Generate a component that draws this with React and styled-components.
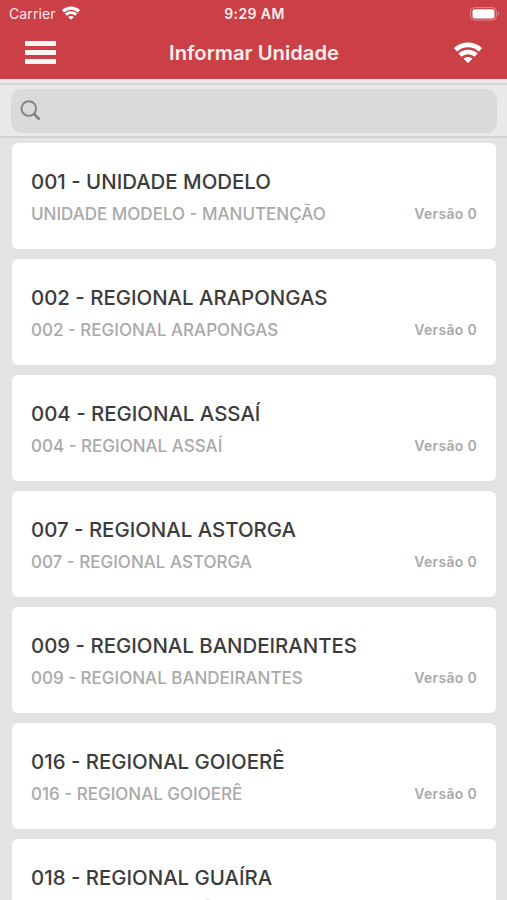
import styled, { createGlobalStyle } from "styled-components";

const UNITS = [
    { code: "001", name: "UNIDADE MODELO", detail: "UNIDADE MODELO - MANUTENÇÃO" },
    { code: "002", name: "REGIONAL ARAPONGAS" },
    { code: "004", name: "REGIONAL ASSAÍ" },
    { code: "007", name: "REGIONAL ASTORGA" },
    { code: "009", name: "REGIONAL BANDEIRANTES" },
    { code: "016", name: "REGIONAL GOIOERÊ" },
    { code: "018", name: "REGIONAL GUAÍRA" },
];

function WifiIcon({ width, height }) {
    return (
        <svg width={width} height={height} viewBox="0 0 28 21" fill="none">
            <path d="M1.5 7.9C8.4 1.2 19.6 1.2 26.5 7.9" stroke="#fff" strokeWidth="4.8" />
            <path d="M5.8 13C10.5 8.9 17.5 8.9 22.2 13" stroke="#fff" strokeWidth="4.4" />
            <path d="M9.6 16.8C12.2 14.4 15.8 14.4 18.4 16.8L14 21Z" fill="#fff" />
        </svg>
    );
}

export default function App() {
    return (
        <Screen>
            <GlobalStyle />
            <Header>
                <StatusBar>
                    <Carrier>
                        Carrier
                        <WifiIcon width={18} height={14} />
                    </Carrier>
                    <Clock>9:29 AM</Clock>
                    <Battery>
                        <svg width="30" height="14" viewBox="0 0 30 14" fill="none">
                            <rect x="0.6" y="0.6" width="25.8" height="12.4" rx="3.8" stroke="#e2898e" />
                            <rect x="2.5" y="2.2" width="22" height="9.2" rx="2" fill="#fff" />
                            <path d="M28 4.8C29.6 5.5 29.6 8.3 28 9Z" fill="#e2898e" />
                        </svg>
                    </Battery>
                </StatusBar>
                <NavBar>
                    <MenuButton aria-label="Menu">
                        <span />
                        <span />
                        <span />
                    </MenuButton>
                    <Title>Informar Unidade</Title>
                    <Connection>
                        <WifiIcon width={28} height={21} />
                    </Connection>
                </NavBar>
            </Header>
            <SearchBar>
                <SearchField>
                    <svg width="21" height="21" viewBox="0 0 21 21" fill="none" stroke="#808080">
                        <circle cx="8.8" cy="8.6" r="7.3" strokeWidth="1.9" />
                        <path d="M13.8 13.8L19.6 19.6" strokeWidth="2.7" />
                    </svg>
                    <input aria-label="Buscar" />
                </SearchField>
            </SearchBar>
            <UnitList>
                {UNITS.map((u) => (
                    <UnitCard key={u.code}>
                        <h2>
                            {u.code} - {u.name}
                        </h2>
                        <CardRow>
                            <p>{u.detail || `${u.code} - ${u.name}`}</p>
                            <Version>Versão 0</Version>
                        </CardRow>
                    </UnitCard>
                ))}
            </UnitList>
        </Screen>
    );
}

const GlobalStyle = createGlobalStyle`
    * {
        box-sizing: border-box;
    }
    body {
        margin: 0;
        overflow: hidden;
        font-family: "Inter", "Liberation Sans", sans-serif;
    }
    h1, h2, p {
        margin: 0;
    }
`;
const Screen = styled.div`
    height: 100vh;
    display: flex;
    flex-direction: column;
    overflow: hidden;
    background-color: #e3e3e3;
`;
const Header = styled.header`
    flex: none;
    height: 79px;
    background-color: #cb4047;
    color: #ffffff;
`;
const StatusBar = styled.div`
    height: 27px;
    padding: 0 7px 0 9px;
    display: grid;
    grid-template-columns: 1fr auto 1fr;
    align-items: center;
    font-size: 14px;
`;
const Carrier = styled.div`
    display: flex;
    align-items: center;
    gap: 6px;
    color: #fbe9ea;
    letter-spacing: 0.1px;
    svg {
        margin-top: -2px;
    }
`;
const Clock = styled.div`
    font-weight: 600;
    color: #fdeeee;
    letter-spacing: 0.4px;
`;
const Battery = styled.div`
    display: flex;
    justify-content: flex-end;
`;
const NavBar = styled.div`
    height: 50px;
    padding: 0 25px;
    display: grid;
    grid-template-columns: 1fr auto 1fr;
    align-items: center;
`;
const MenuButton = styled.button`
    width: 31px;
    padding: 0;
    border: none;
    background: none;
    display: flex;
    flex-direction: column;
    gap: 4px;
    span {
        height: 5px;
        background-color: #fff4f4;
    }
`;
const Title = styled.h1`
    padding: 1px 0 0 1px;
    font-size: 20.2px;
    font-weight: 600;
    line-height: 24px;
    color: #fdeeee;
`;
const Connection = styled.div`
    display: flex;
    justify-content: flex-end;
`;
const SearchBar = styled.div`
    flex: none;
    height: 59px;
    padding: 6px 10px 0 11px;
    background:
        linear-gradient(#d5d5d5, #d5d5d5) 0 4px / 100% 2px no-repeat,
        #e9e9e9;
    border-bottom: 2px solid #d3d3d3;
    display: flex;
    align-items: center;
`;
const SearchField = styled.label`
    flex: 1;
    height: 44px;
    padding: 0 9px;
    display: flex;
    align-items: center;
    gap: 8px;
    border-radius: 11px;
    background-color: #dadada;
    input {
        flex: 1;
        border: none;
        outline: none;
        background: none;
        font: inherit;
    }
`;
const UnitList = styled.main`
    padding: 5px 11px 0 12px;
    display: flex;
    flex-direction: column;
    gap: 10px;
`;
const UnitCard = styled.article`
    flex: none;
    height: 106px;
    padding: 23px 19px 0;
    border-radius: 6px;
    background-color: #ffffff;
    h2 {
        font-size: 20.4px;
        font-weight: 500;
        line-height: 32px;
        color: #3c3c3c;
    }
`;
const CardRow = styled.div`
    display: flex;
    justify-content: space-between;
    font-weight: 500;
    line-height: 32px;
    color: #a9a9a9;
    p {
        font-size: 17px;
    }
`;
const Version = styled.span`
    font-size: 14px;
    font-weight: 600;
    letter-spacing: 0.3px;
`;
